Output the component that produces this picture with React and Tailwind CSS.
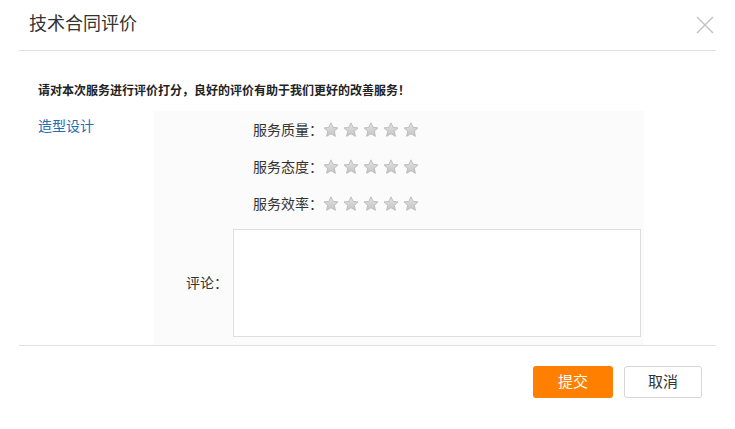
import { useState } from 'react';

const RATING_ITEMS = [
  { key: 'quality', label: '服务质量' },
  { key: 'attitude', label: '服务态度' },
  { key: 'efficiency', label: '服务效率' }
];

function Star({ active }) {
  return (
    <svg width="16" height="16" viewBox="0 0 16 16" className="block">
      <defs>
        <linearGradient id={active ? 'starOn' : 'starOff'} x1="0" y1="0" x2="0" y2="1">
          <stop offset="0" stopColor={active ? '#ffc94d' : '#e4e4e4'} />
          <stop offset="1" stopColor={active ? '#ff9a00' : '#c4c4c4'} />
        </linearGradient>
      </defs>
      <polygon
        points="8,0.9 10.1,5.4 15,5.9 11.3,9.2 12.4,14.3 8,11.7 3.6,14.3 4.7,9.2 1,5.9 5.9,5.4"
        fill={`url(#${active ? 'starOn' : 'starOff'})`}
        stroke={active ? '#e08a00' : '#b9b9b9'}
        strokeWidth="0.9"
        strokeLinejoin="round"
      />
    </svg>
  );
}

function StarRating({ value, onChange }) {
  return (
    <div className="flex gap-[4px]">
      {[1, 2, 3, 4, 5].map(n => (
        <button key={n} type="button" onClick={() => onChange(n)} className="p-0 cursor-pointer">
          <Star active={n <= value} />
        </button>
      ))}
    </div>
  );
}

export default function App() {
  const [ratings, setRatings] = useState({ quality: 0, attitude: 0, efficiency: 0 });
  const [comment, setComment] = useState('');

  return (
    <div
      className="w-[735px] h-[429px] bg-white text-[#333]"
      style={{ fontFamily: '"Liberation Sans", "Noto Sans CJK SC", sans-serif' }}
    >
      {/* Header */}
      <div className="mx-[19px] h-[51px] flex items-center justify-between border-b border-[#e1e1e1]">
        <h2 className="pl-[10px] pb-[1px] text-[18px] font-normal text-[#333]">技术合同评价</h2>
        <button type="button" className="mr-[2px] mb-[1px] p-0">
          <svg width="18" height="18" viewBox="0 0 18 18">
            <path d="M1 1L17 17M17 1L1 17" stroke="#c2c2c2" strokeWidth="1.4" />
          </svg>
        </button>
      </div>

      {/* Body */}
      <div className="mx-[19px] border-b border-[#e1e1e1]">
        <p className="pl-[19px] pt-[32px] h-[60px] text-[12px] font-bold leading-[16px] text-[#222]">
          请对本次服务进行评价打分，良好的评价有助于我们更好的改善服务！
        </p>
        <div className="flex">
          <div className="w-[135px] pl-[19px] pt-[5px] text-[14px] leading-[20px] text-[#1f6db3]">造型设计</div>
          <div className="w-[490px] bg-[#fbfbfb] pb-[8px]">
            {RATING_ITEMS.map(item => (
              <div key={item.key} className="h-[37px] flex items-center">
                <span className="w-[169px] text-right text-[14px] leading-[20px]">{item.label}：</span>
                <StarRating
                  value={ratings[item.key]}
                  onChange={v => setRatings(prev => ({ ...prev, [item.key]: v }))}
                />
              </div>
            ))}
            <div className="mt-[7px] flex items-center">
              <span className="w-[74px] pl-[5px] text-right text-[14px] leading-[20px]">评论：</span>
              <textarea
                value={comment}
                onChange={e => setComment(e.target.value)}
                className="ml-[5px] w-[408px] h-[108px] border border-[#ddd] bg-white resize-none outline-none p-2 text-[14px]"
              />
            </div>
          </div>
        </div>
      </div>

      {/* Footer */}
      <div className="mx-[19px] pt-[20px] flex justify-end gap-[11px] pr-[14px]">
        <button
          type="button"
          className="w-[80px] h-[32px] rounded-[3px] bg-[#ff8000] text-white text-[15px]"
        >
          提交
        </button>
        <button
          type="button"
          className="w-[78px] h-[32px] rounded-[3px] border border-[#d6d6d6] bg-white text-[#333] text-[15px]"
        >
          取消
        </button>
      </div>
    </div>
  );
}
